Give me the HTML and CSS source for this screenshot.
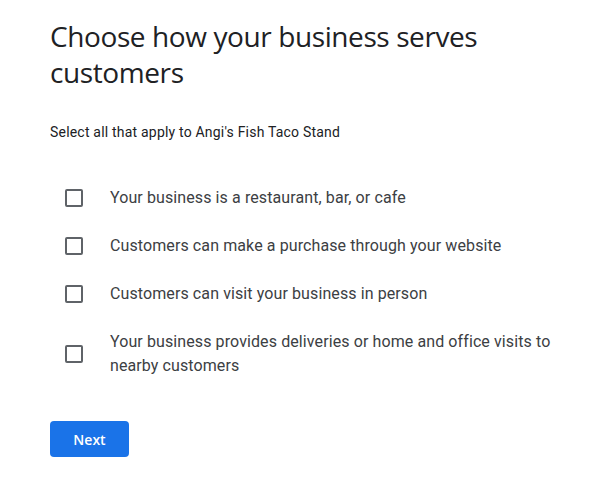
FILE: index.html
```html
<!DOCTYPE html>
<html lang="en">
<head>
    <meta charset="UTF-8">
    <meta name="viewport" content="width=device-width, initial-scale=1.0">
    <title>Business services</title>
    <link rel="stylesheet" href="styles.css">
</head>
<body>
    <div class="container">
        <h1>Choose how your business serves customers</h1>
        <p class="subtitle">Select all that apply to Angi's Fish Taco Stand</p>

        <div class="options">
            <label class="option">
                <span class="check"><input type="checkbox"><span class="box"></span></span>
                <span class="text">Your business is a restaurant, bar, or cafe</span>
            </label>
            <label class="option">
                <span class="check"><input type="checkbox"><span class="box"></span></span>
                <span class="text">Customers can make a purchase through your website</span>
            </label>
            <label class="option">
                <span class="check"><input type="checkbox"><span class="box"></span></span>
                <span class="text">Customers can visit your business in person</span>
            </label>
            <label class="option">
                <span class="check"><input type="checkbox"><span class="box"></span></span>
                <span class="text">Your business provides deliveries or home and office visits to nearby customers</span>
            </label>
        </div>

        <button class="next-btn">Next</button>
    </div>
</body>
</html>
```

FILE: styles.css
```css
body {
    margin: 0;
    background-color: #fff;
    font-family: Roboto, "Liberation Sans", sans-serif;
}

.container {
    padding: 18px 40px 0 50px;
}

h1 {
    margin: 0;
    font-family: "Open Sans", Roboto, sans-serif;
    font-size: 28px;
    font-weight: 400;
    line-height: 36px;
    letter-spacing: -0.4px;
    color: #202124;
    max-width: 450px;
}

.subtitle {
    margin: 32px 0 32px;
    font-size: 14px;
    line-height: 20px;
    letter-spacing: 0.2px;
    color: #202124;
}

.options {
    display: flex;
    flex-direction: column;
}

.option {
    display: flex;
    align-items: center;
    padding: 12px 0;
    cursor: pointer;
}

.check {
    position: relative;
    flex: 0 0 48px;
    display: flex;
    justify-content: center;
}

.check input {
    position: absolute;
    opacity: 0;
    margin: 0;
}

.box {
    width: 18px;
    height: 18px;
    box-sizing: border-box;
    border: 2px solid #5f6368;
    border-radius: 2px;
}

.text {
    margin-left: 12px;
    font-size: 16px;
    line-height: 24px;
    letter-spacing: 0.1px;
    color: #3c4043;
    max-width: 450px;
}

.next-btn {
    margin-top: 31px;
    width: 79px;
    height: 36px;
    border: none;
    border-radius: 4px;
    background-color: #1a73e8;
    color: #fff;
    font-family: "Open Sans", Roboto, sans-serif;
    font-size: 14px;
    font-weight: 600;
    cursor: pointer;
}
```
